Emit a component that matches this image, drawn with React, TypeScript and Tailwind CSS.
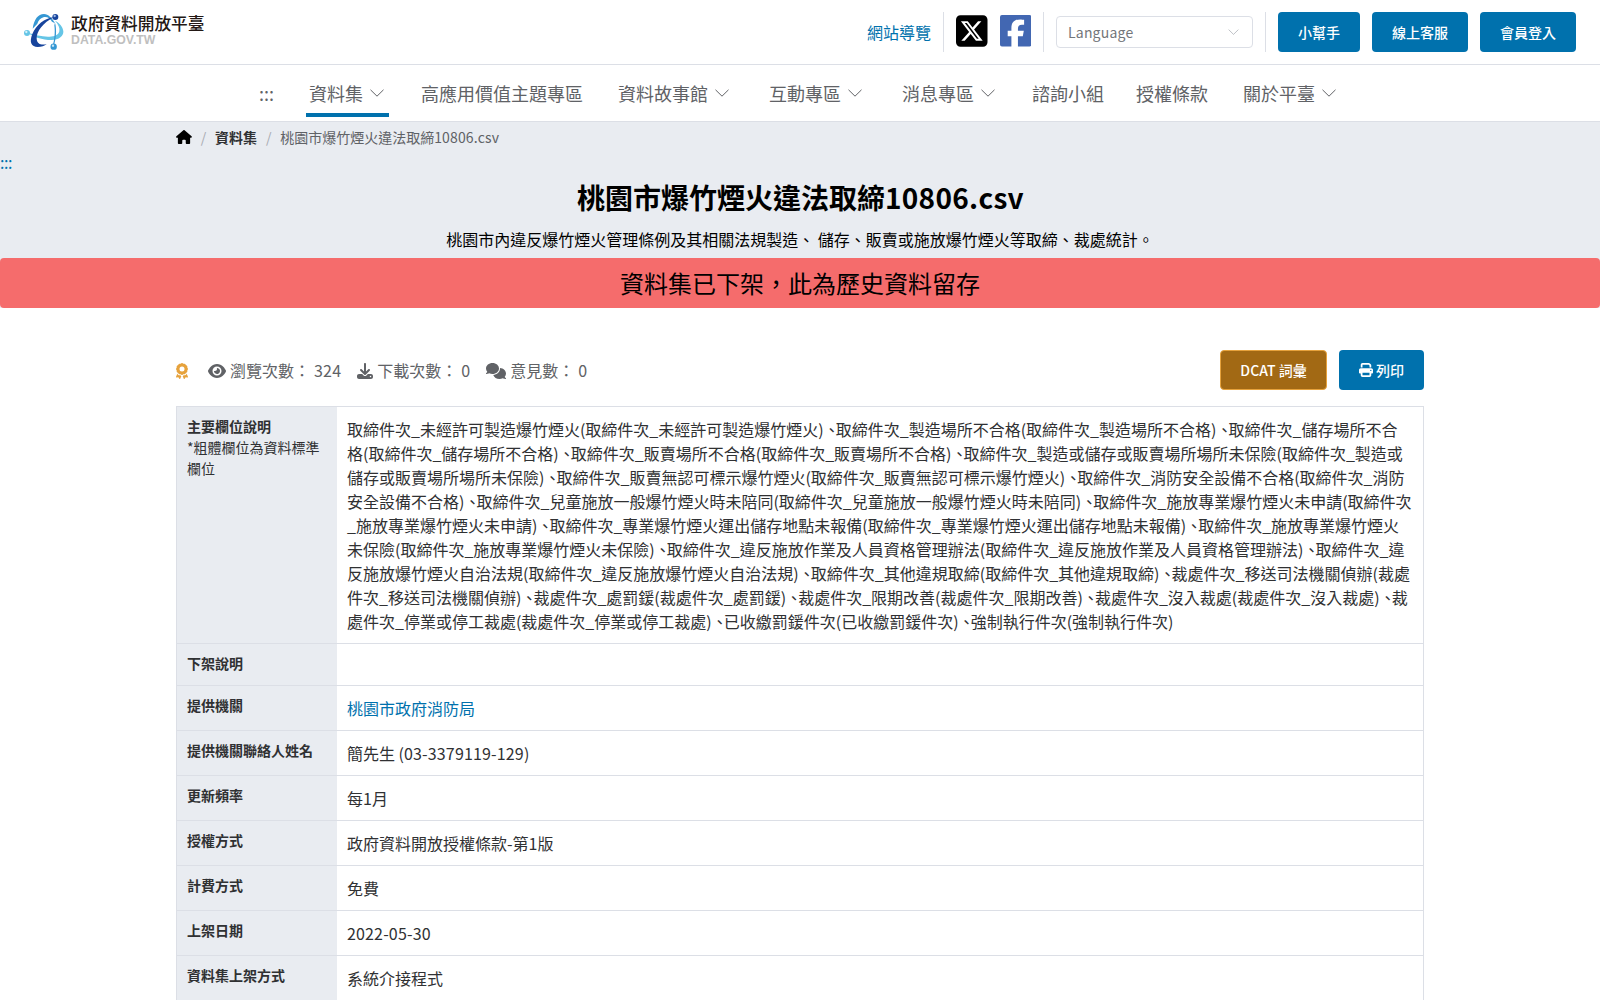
import {
  FaAward,
  FaComments,
  FaDownload,
  FaEye,
  FaHouse,
  FaPrint,
  FaSquareXTwitter,
} from "react-icons/fa6";

type NavItem = {
  label: string;
  dropdown?: boolean;
  active?: boolean;
};

type DetailRow = {
  label: string;
  note?: string;
  value: React.ReactNode;
  link?: boolean;
};

const navItems: NavItem[] = [
  { label: "資料集", dropdown: true, active: true },
  { label: "高應用價值主題專區" },
  { label: "資料故事館", dropdown: true },
  { label: "互動專區", dropdown: true },
  { label: "消息專區", dropdown: true },
  { label: "諮詢小組" },
  { label: "授權條款" },
  { label: "關於平臺", dropdown: true },
];

const fields = [
  "取締件次_未經許可製造爆竹煙火",
  "取締件次_製造場所不合格",
  "取締件次_儲存場所不合格",
  "取締件次_販賣場所不合格",
  "取締件次_製造或儲存或販賣場所場所未保險",
  "取締件次_販賣無認可標示爆竹煙火",
  "取締件次_消防安全設備不合格",
  "取締件次_兒童施放一般爆竹煙火時未陪同",
  "取締件次_施放專業爆竹煙火未申請",
  "取締件次_專業爆竹煙火運出儲存地點未報備",
  "取締件次_施放專業爆竹煙火未保險",
  "取締件次_違反施放作業及人員資格管理辦法",
  "取締件次_違反施放爆竹煙火自治法規",
  "取締件次_其他違規取締",
  "裁處件次_移送司法機關偵辦",
  "裁處件次_處罰鍰",
  "裁處件次_限期改善",
  "裁處件次_沒入裁處",
  "裁處件次_停業或停工裁處",
  "已收繳罰鍰件次",
  "強制執行件次",
];

// Gives runs of digits a little more room than the Chinese text around them
const Spaced: React.FC<{ text: string }> = ({ text }) => (
  <>
    {text.split(/([0-9][0-9a-z.-]*)/).map((part, index) =>
      index % 2 ? (
        <span key={index} className="tracking-[0.01em]">
          {part}
        </span>
      ) : (
        part
      )
    )}
  </>
);

// The negative word spacing pulls each field closer to the comma before it
const FieldList: React.FC = () => (
  <p className="[word-spacing:-7.53px]">{fields.map((field) => `${field}(${field})`).join("、 ")}</p>
);

const rows: DetailRow[] = [
  { label: "主要欄位說明", note: "*粗體欄位為資料標準欄位", value: <FieldList /> },
  { label: "下架說明", value: "" },
  { label: "提供機關", value: "桃園市政府消防局", link: true },
  { label: "提供機關聯絡人姓名", value: <Spaced text="簡先生 (03-3379119-129)" /> },
  { label: "更新頻率", value: "每1月" },
  { label: "授權方式", value: <Spaced text="政府資料開放授權條款-第1版" /> },
  { label: "計費方式", value: "免費" },
  { label: "上架日期", value: <Spaced text="2022-05-30" /> },
  { label: "資料集上架方式", value: "系統介接程式" },
];

const Chevron: React.FC<{ className?: string }> = ({ className }) => (
  <svg viewBox="0 0 14 8" fill="none" stroke="currentColor" className={className}>
    <path d="M0.5 0.8 7 7.2 13.5 0.8" />
  </svg>
);

const FacebookIcon: React.FC = () => (
  <svg viewBox="0 32 448 448" fill="#4267b2" className="size-[31.5px] -translate-y-px">
    <path d="M28 32A28 28 0 0 0 0 60V452a28 28 0 0 0 28 28H162.2V334.2H109.4V256h52.8V222.3c0-87.1 39.4-127.5 125-127.5c16.2 0 44.2 3.2 55.7 6.4V172c-6-.6-16.5-1-29.6-1c-42 0-58.2 15.9-58.2 57.2V256h83.6l-14.4 78.2H255.1V480H420a28 28 0 0 0 28-28V60a28 28 0 0 0-28-28z" />
  </svg>
);

const Logo: React.FC = () => (
  <a href="#" className="flex items-start">
    <svg width="40" height="36" viewBox="24 24 120 108" className="mt-0.5">
      <path d="M50 68C54 40 66 24 84 24c13 1 24 11 33 28l-9-5C102 36 92 31 82 34c-9 3-14 9-18 19z" fill="#3597d3" />
      <path d="M36 80C50 92 80 102 106 102c24 0 37-12 36-26-1-14-13-26-25-32 10 11 15 22 13 32-3 12-16 17-34 16-20-1-40-6-60-12z" fill="#65c5e6" />
      <path d="M117 50c6 22 3 50-4 70l-3-1c5-16 8-40 5-61z" fill="#3597d3" />
      <path d="M113 34C86 36 60 58 49 84c-10 26-3 38 16 39 11 0 21-3 27-9-13 4-29 2-30-16-1-22 20-48 51-64z" fill="#17449c" />
      <circle cx="33" cy="81" r="9" fill="#65c5e6" />
      <circle cx="118" cy="33" r="9" fill="#17449c" />
      <circle cx="113" cy="122" r="9.5" fill="#3597d3" />
      <circle cx="31" cy="78" r="3.5" fill="#d8f2fa" />
      <circle cx="116" cy="30" r="3.5" fill="#9db9e4" />
      <circle cx="111" cy="119" r="3.5" fill="#c9e5f5" />
    </svg>
    <div className="ml-[7px] pt-px">
      <div className="text-[16.7px] leading-5 font-medium text-[#231815]">政府資料開放平臺</div>
      <div className="mt-px font-['Liberation_Sans',sans-serif] text-[12.3px] leading-3 font-bold text-[#bfbfbf]">
        DATA.GOV.TW
      </div>
    </div>
  </a>
);

const Header: React.FC = () => (
  <header className="flex h-[65px] items-start justify-between border-b border-[#dcdfe6] pt-3 pr-6 pl-6">
    <Logo />
    <div className="flex h-10 items-center gap-3 text-sm">
      <a href="#" className="text-base text-[#0071ad]">
        網站導覽
      </a>
      <div className="h-10 w-px bg-[#dcdfe6]" />
      <FaSquareXTwitter className="h-9 w-[31.5px] -translate-y-px text-black" />
      <FacebookIcon />
      <div className="h-10 w-px bg-[#dcdfe6]" />
      <div className="flex h-8 w-[197px] items-center justify-between rounded border border-[#dcdfe6] px-[11px] text-[#73767a]">
        <span className="tracking-[0.2px]">Language</span>
        <Chevron className="mr-0.5 h-1.5 w-[11px] text-[#a8abb2]" />
      </div>
      <div className="h-10 w-px bg-[#dcdfe6]" />
      {["小幫手", "線上客服", "會員登入"].map((label) => (
        <button key={label} className="h-10 rounded bg-[#0071ad] px-5 font-medium text-white">
          {label}
        </button>
      ))}
    </div>
  </header>
);

const Nav: React.FC = () => (
  <nav className="flex h-[57px] justify-center gap-8 border-b border-[#dcdfe6] pt-2 text-lg text-[#606266]">
    <a href="#" className="leading-10">
      :::
    </a>
    {navItems.map((item) => (
      <a
        key={item.label}
        href="#"
        className={`flex h-11 items-center border-b-4 ${item.dropdown ? "gap-[7px] pr-[5px] pl-[3px]" : ""} ${
          item.active ? "border-[#0071ad]" : "border-transparent"
        }`}
      >
        {item.label}
        {item.dropdown && <Chevron className="h-2 w-3.5" />}
      </a>
    ))}
  </nav>
);

const Hero: React.FC = () => (
  <section className="bg-[#e9ecf1] text-black">
    <div className="mx-auto flex h-[30px] w-[1248px] items-center text-sm text-[#606266]">
      <FaHouse className="h-3.5 w-4 text-black" />
      <span className="mx-[8.8px] text-[#a8abb2]">/</span>
      <a href="#" className="font-bold text-[#303133]">
        資料集
      </a>
      <span className="mx-[8.8px] text-[#a8abb2]">/</span>
      <span>
        <Spaced text="桃園市爆竹煙火違法取締10806.csv" />
      </span>
    </div>
    <a href="#" className="block h-[21px] text-base leading-5 tracking-[-0.4px] text-[#0071ad]">
      :::
    </a>
    <h1 className="h-12 pl-px text-center text-[28px] leading-12 font-bold">
      <Spaced text="桃園市爆竹煙火違法取締10806.csv" />
    </h1>
    <p className="h-[37px] text-center text-base leading-9">
      桃園市內違反爆竹煙火管理條例及其相關法規製造、 儲存、販賣或施放爆竹煙火等取締、裁處統計。
    </p>
    <div className="h-[50px] rounded bg-[#f56c6c] text-center text-2xl leading-[50px]">
      資料集已下架，此為歷史資料留存
    </div>
  </section>
);

const Stat: React.FC<{ icon: React.ReactNode; label: string; count: number }> = ({ icon, label, count }) => (
  <div className="flex items-center gap-1">
    {icon}
    <span>
      {label}：<span className="tracking-[0.25px]"> {count}</span>
    </span>
  </div>
);

const Toolbar: React.FC = () => (
  <div className="mt-[42px] flex h-10 items-center text-base text-[#606266]">
    <FaAward className="mt-0.5 h-4 w-3 text-[#e6a23c]" />
    <div className="ml-5 flex gap-4">
      <Stat icon={<FaEye className="mt-0.5 h-4 w-[18px]" />} label="瀏覽次數" count={324} />
      <Stat icon={<FaDownload className="mt-0.5 size-4" />} label="下載次數" count={0} />
      <Stat icon={<FaComments className="mt-0.5 h-4 w-5" />} label="意見數" count={0} />
    </div>
    <div className="ml-auto flex gap-3 text-sm font-medium text-white">
      <button className="h-10 w-[107px] rounded border border-[#e6a23c] bg-[#a26914]">DCAT 詞彙</button>
      <button className="flex h-10 items-center gap-[3px] rounded bg-[#0071ad] px-5">
        <FaPrint className="size-3.5" />
        列印
      </button>
    </div>
  </div>
);

const DetailsTable: React.FC = () => (
  <div className="mt-4 border border-[#dcdfe6] text-[#303133]">
    {rows.map((row) => (
      <div key={row.label} className="flex border-b border-[#dcdfe6]">
        <div className="w-40 shrink-0 bg-[#e9ecf1] px-2.5 pt-[9px] pb-[11px] text-sm leading-[21px]">
          <div className="font-bold">{row.label}</div>
          {row.note}
        </div>
        <div className="flex-1 p-2.5 text-base leading-6">
          {row.link ? (
            <a href="#" className="text-[#0071ad]">
              {row.value}
            </a>
          ) : (
            row.value
          )}
        </div>
      </div>
    ))}
  </div>
);

export default function App() {
  return (
    <div
      lang="zh-Hant"
      className="h-[1000px] overflow-hidden bg-white font-['Noto_Sans_CJK_TC',sans-serif]"
    >
      <Header />
      <Nav />
      <Hero />
      <main className="mx-auto w-[1248px]">
        <Toolbar />
        <DetailsTable />
      </main>
    </div>
  );
}
